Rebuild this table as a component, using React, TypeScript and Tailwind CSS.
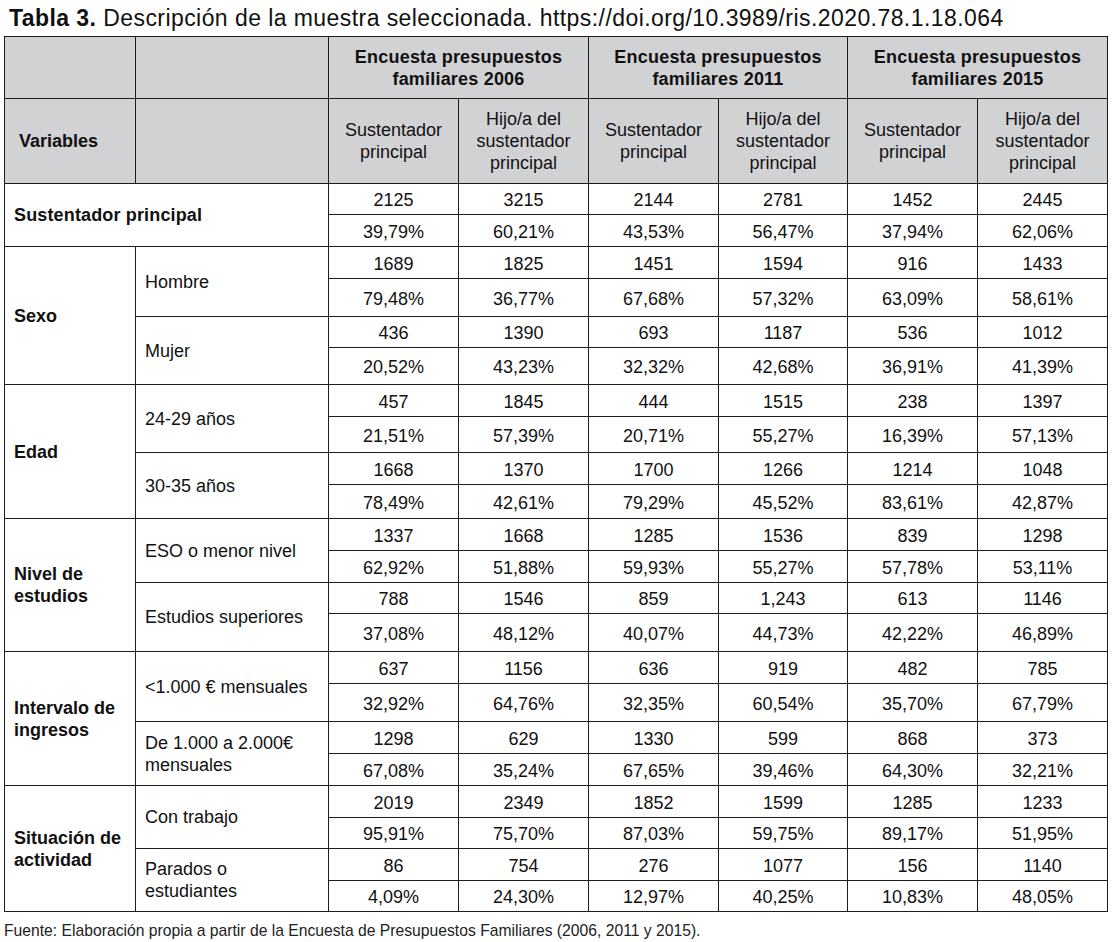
import { Fragment } from 'react'

interface SubRow {
  label: string[]
  counts: string[]
  shares: string[]
}

interface Group {
  label: string[]
  subs: SubRow[]
}

const surveys = ['2006', '2011', '2015']

const mainRow = {
  counts: ['2125', '3215', '2144', '2781', '1452', '2445'],
  shares: ['39,79%', '60,21%', '43,53%', '56,47%', '37,94%', '62,06%'],
}

const groups: Group[] = [
  {
    label: ['Sexo'],
    subs: [
      {
        label: ['Hombre'],
        counts: ['1689', '1825', '1451', '1594', '916', '1433'],
        shares: ['79,48%', '36,77%', '67,68%', '57,32%', '63,09%', '58,61%'],
      },
      {
        label: ['Mujer'],
        counts: ['436', '1390', '693', '1187', '536', '1012'],
        shares: ['20,52%', '43,23%', '32,32%', '42,68%', '36,91%', '41,39%'],
      },
    ],
  },
  {
    label: ['Edad'],
    subs: [
      {
        label: ['24-29 años'],
        counts: ['457', '1845', '444', '1515', '238', '1397'],
        shares: ['21,51%', '57,39%', '20,71%', '55,27%', '16,39%', '57,13%'],
      },
      {
        label: ['30-35 años'],
        counts: ['1668', '1370', '1700', '1266', '1214', '1048'],
        shares: ['78,49%', '42,61%', '79,29%', '45,52%', '83,61%', '42,87%'],
      },
    ],
  },
  {
    label: ['Nivel de', 'estudios'],
    subs: [
      {
        label: ['ESO o menor nivel'],
        counts: ['1337', '1668', '1285', '1536', '839', '1298'],
        shares: ['62,92%', '51,88%', '59,93%', '55,27%', '57,78%', '53,11%'],
      },
      {
        label: ['Estudios superiores'],
        counts: ['788', '1546', '859', '1,243', '613', '1146'],
        shares: ['37,08%', '48,12%', '40,07%', '44,73%', '42,22%', '46,89%'],
      },
    ],
  },
  {
    label: ['Intervalo de', 'ingresos'],
    subs: [
      {
        label: ['<1.000 € mensuales'],
        counts: ['637', '1156', '636', '919', '482', '785'],
        shares: ['32,92%', '64,76%', '32,35%', '60,54%', '35,70%', '67,79%'],
      },
      {
        label: ['De 1.000 a 2.000€', 'mensuales'],
        counts: ['1298', '629', '1330', '599', '868', '373'],
        shares: ['67,08%', '35,24%', '67,65%', '39,46%', '64,30%', '32,21%'],
      },
    ],
  },
  {
    label: ['Situación de', 'actividad'],
    subs: [
      {
        label: ['Con trabajo'],
        counts: ['2019', '2349', '1852', '1599', '1285', '1233'],
        shares: ['95,91%', '75,70%', '87,03%', '59,75%', '89,17%', '51,95%'],
      },
      {
        label: ['Parados o', 'estudiantes'],
        counts: ['86', '754', '276', '1077', '156', '1140'],
        shares: ['4,09%', '24,30%', '12,97%', '40,25%', '10,83%', '48,05%'],
      },
    ],
  },
]

function Lines({ lines }: { lines: string[] }) {
  return (
    <span>
      {lines.map((l, i) => (
        <Fragment key={i}>
          {i > 0 && <br />}
          {l}
        </Fragment>
      ))}
    </span>
  )
}

function ValueCells({ values }: { values: string[] }) {
  return (
    <>
      {values.map((v, i) => (
        <div key={i} className="flex items-center justify-center bg-white pt-[2px]">
          {v}
        </div>
      ))}
    </>
  )
}

export default function App() {
  return (
    <div
      className="w-[1113px] h-[942px] bg-white text-[#111]"
      style={{ fontFamily: '"Liberation Sans", Arial, sans-serif' }}
    >
      {/* Caption */}
      <div className="h-[36px] pl-[9px] text-[23px] leading-[36px] tracking-[0.43px] whitespace-nowrap">
        <span className="font-bold">Tabla 3.</span> Descripción de la muestra seleccionada.
        https://doi.org/10.3989/ris.2020.78.1.18.064
      </div>

      {/* Table: the dark background shows through the 1px gaps as cell borders */}
      <div className="ml-[4px] grid w-fit gap-px bg-[#1c1c1c] p-px text-[18px] leading-[22px] grid-cols-[130px_192px_129px_129px_129px_128px_129px_129px] grid-rows-[61px_84px_30px_31px_31px_37px_30px_36px_31px_35px_31px_33px_31px_31px_30px_37px_31px_37px_31px_31px_31px_30px_31px_30px]">
        {/* Header row 1 */}
        <div className="bg-[#d1d2d4]" />
        <div className="bg-[#d1d2d4]" />
        {surveys.map((year) => (
          <div
            key={year}
            className="col-span-2 flex items-center justify-center bg-[#d1d2d4] text-center font-bold tracking-[0.2px]"
          >
            <span>
              Encuesta presupuestos
              <br />
              familiares {year}
            </span>
          </div>
        ))}

        {/* Header row 2 */}
        <div className="flex items-center bg-[#d1d2d4] pl-[14px] font-bold">Variables</div>
        <div className="bg-[#d1d2d4]" />
        {surveys.map((year) => (
          <Fragment key={year}>
            <div className="flex items-center justify-center bg-[#d1d2d4] text-center">
              <span>
                Sustentador
                <br />
                principal
              </span>
            </div>
            <div className="flex items-center justify-center bg-[#d1d2d4] text-center">
              <span>
                Hijo/a del
                <br />
                sustentador
                <br />
                principal
              </span>
            </div>
          </Fragment>
        ))}

        {/* Sustentador principal */}
        <div className="col-span-2 row-span-2 flex items-center bg-white pl-[9px] font-bold tracking-[0.15px]">
          Sustentador principal
        </div>
        <ValueCells values={mainRow.counts} />
        <ValueCells values={mainRow.shares} />

        {groups.map((g) => (
          <Fragment key={g.label.join(' ')}>
            <div className="row-span-4 flex items-center bg-white pl-[9px] font-bold">
              <Lines lines={g.label} />
            </div>
            {g.subs.map((s) => (
              <Fragment key={s.label.join(' ')}>
                <div className="row-span-2 flex items-center bg-white pl-[9px]">
                  <Lines lines={s.label} />
                </div>
                <ValueCells values={s.counts} />
                <ValueCells values={s.shares} />
              </Fragment>
            ))}
          </Fragment>
        ))}
      </div>

      {/* Source note */}
      <div className="pl-[4px] pt-[9px] text-[15.7px] leading-[20px] text-[#222] whitespace-nowrap">
        Fuente: Elaboración propia a partir de la Encuesta de Presupuestos Familiares (2006, 2011 y
        2015).
      </div>
    </div>
  )
}
